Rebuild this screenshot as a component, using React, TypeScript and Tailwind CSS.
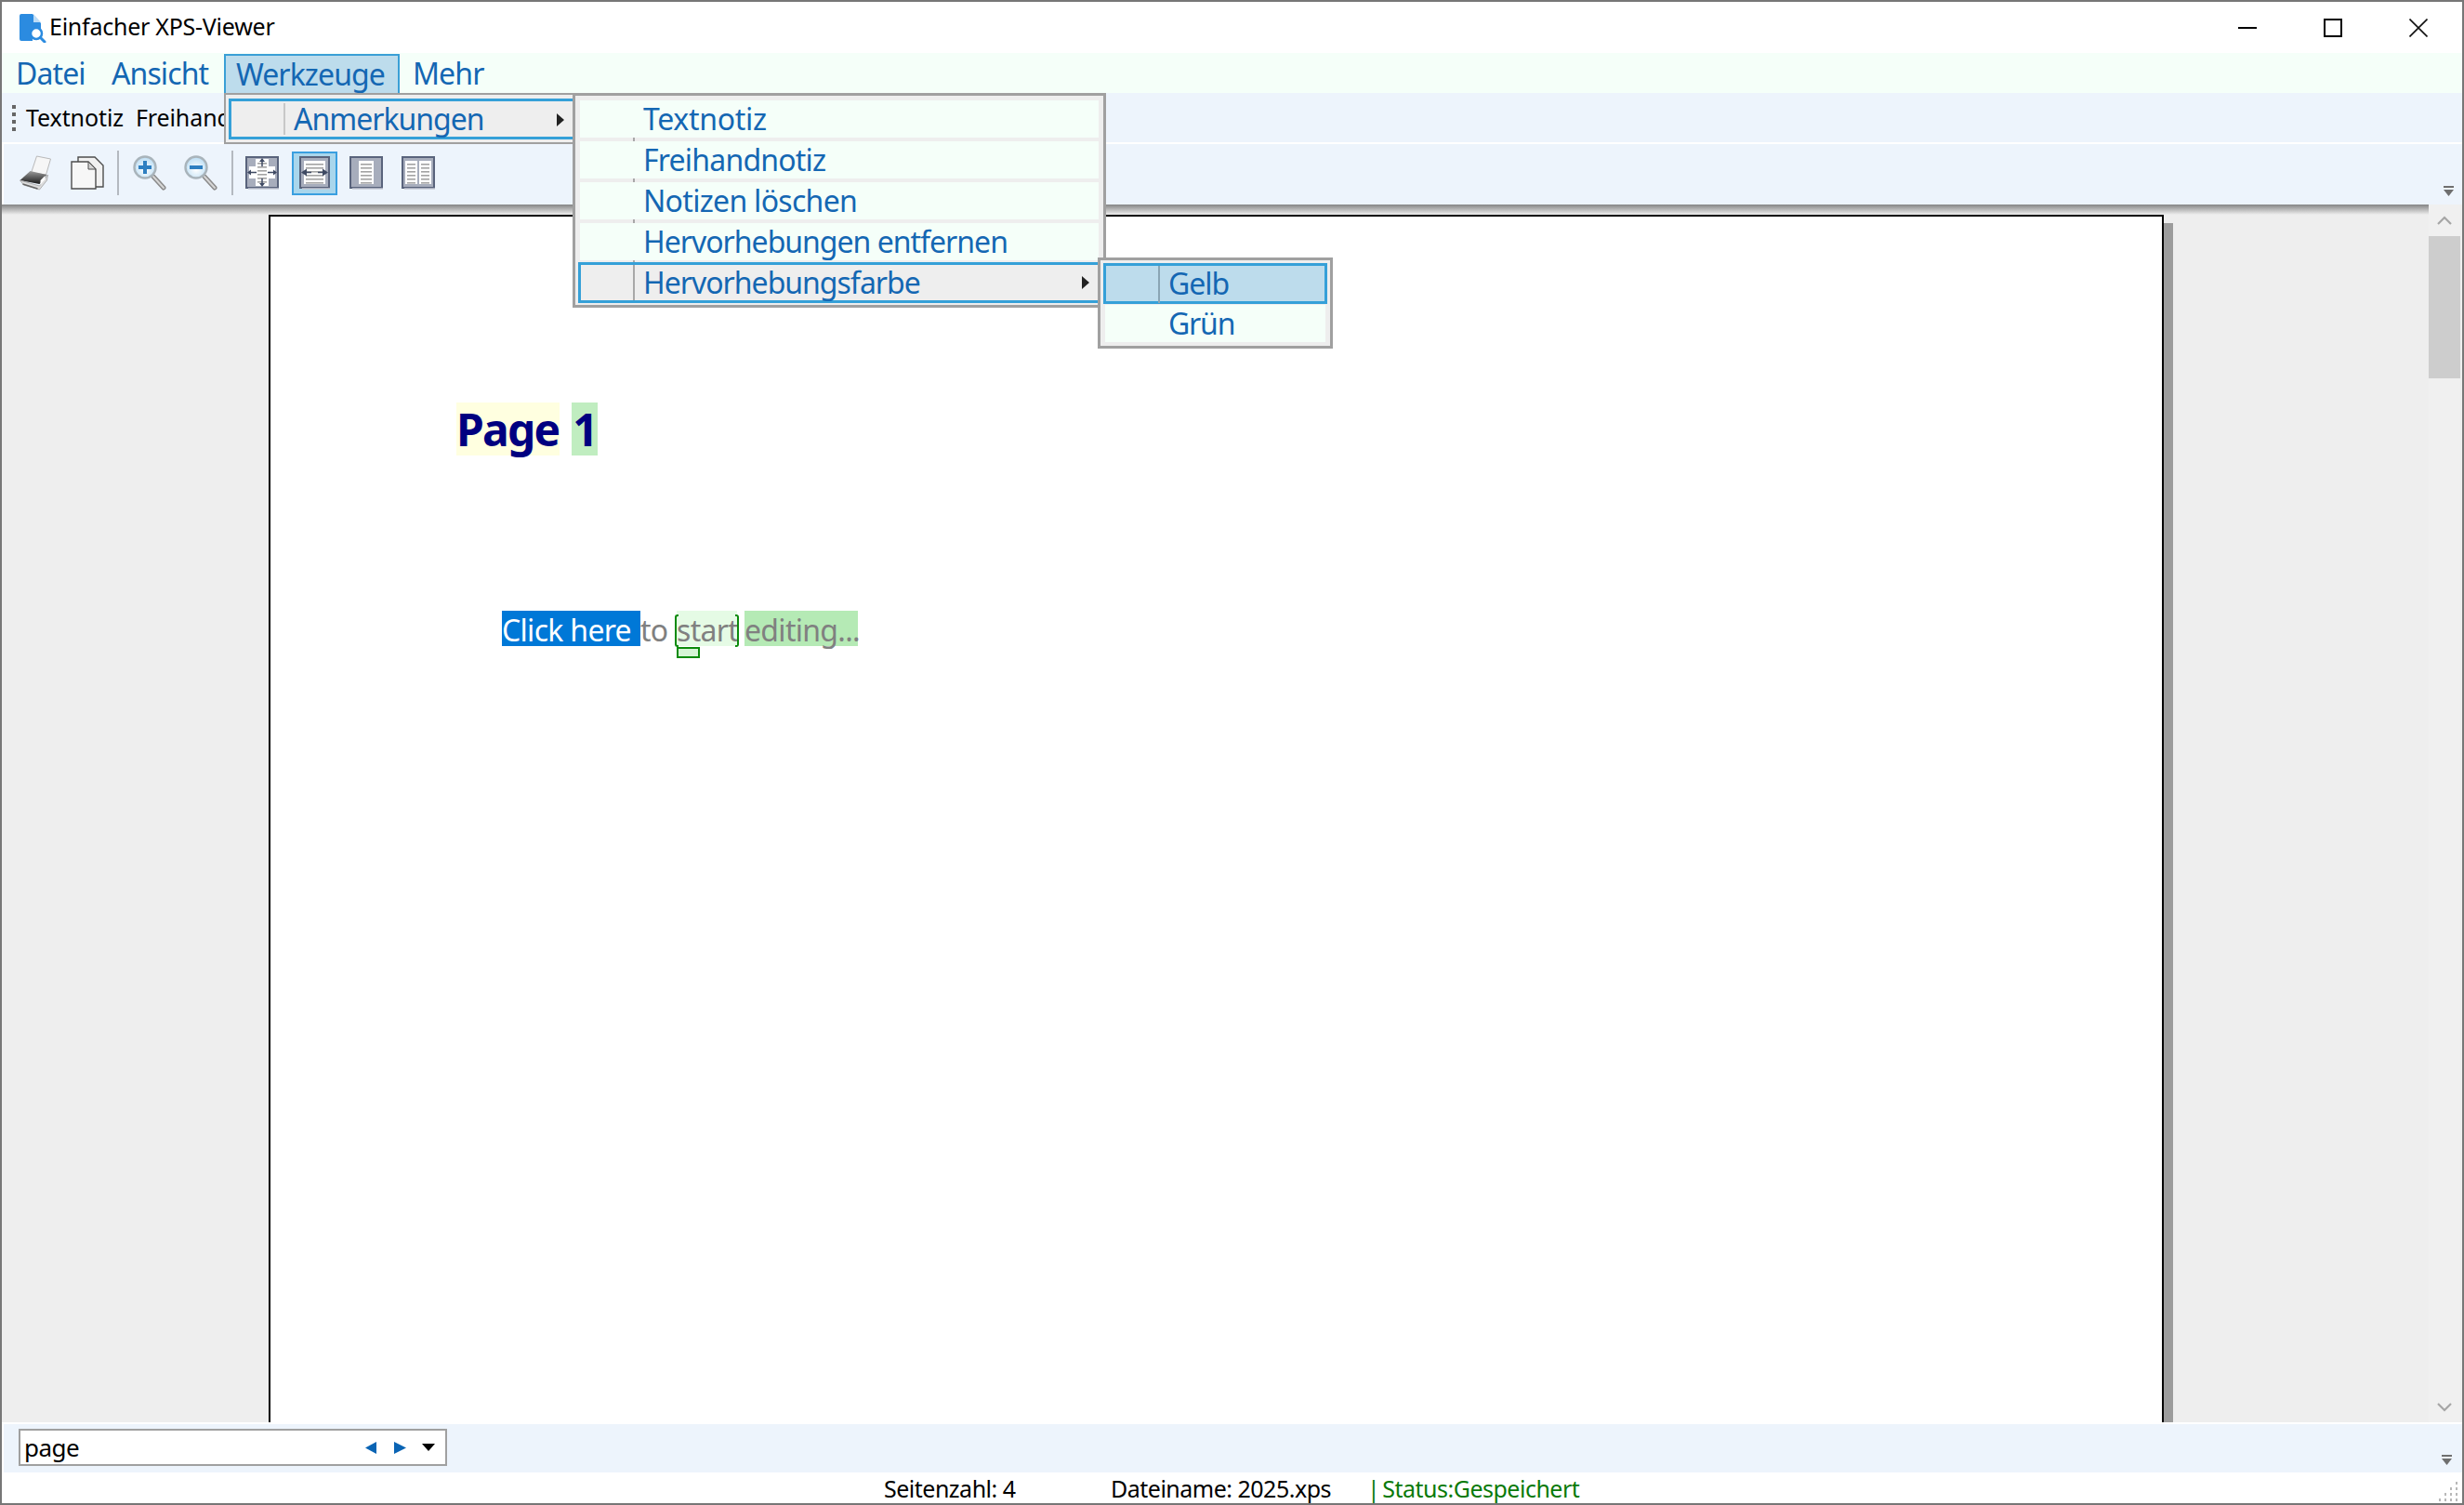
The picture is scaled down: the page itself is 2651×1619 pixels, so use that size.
const menuBlue = "text-[#1467b3]";

function AppIcon() {
  return (
    <svg width="30" height="32" viewBox="0 0 30 32">
      <path d="M1 3a2 2 0 0 1 2-2h12l9 10v7a9 9 0 0 0-9 11v1H3a2 2 0 0 1-2-2z" fill="#2b8be0" />
      <path d="M16 1l8 9h-8z" fill="#bcdcf6" />
      <circle cx="19" cy="22" r="6" fill="#fff" stroke="#2b8be0" strokeWidth="2.5" />
      <path d="M23.500 26.500l4.500 4.500" stroke="#2b8be0" strokeWidth="3" strokeLinecap="round" />
    </svg>
  );
}

function PrintIcon() {
  return (
    <svg width="36" height="38" viewBox="2 0 35 38">
      <defs>
        <linearGradient id="pr" x1="0" y1="0" x2="0" y2="1">
          <stop offset="0" stopColor="#9a9a9a" />
          <stop offset="1" stopColor="#1a1a1a" />
        </linearGradient>
      </defs>
      <path d="M15 19L21 1l15 3-5 17z" fill="#f6f6f6" stroke="#b9b9b9" />
      <path d="M3 27l11-10 18 4-8 10z" fill="url(#pr)" />
      <path d="M3 27l21 6 9-12-1 6-8 10-17-5z" fill="#dcdcdc" stroke="#9a9a9a" strokeWidth="0.7" />
      <path d="M6 31l16 5" stroke="#666" strokeWidth="1.4" />
      <path d="M25 27l5-5v4l-5 6z" fill="#fff" />
    </svg>
  );
}

function CopyIcon() {
  return (
    <svg width="36" height="36" viewBox="0 0 36 36">
      <path d="M8 1h18l9 9v23H8z" fill="#f1f1f1" stroke="#4d4d4d" strokeWidth="1.4" />
      <path d="M1 6h18l8 8v21H1z" fill="#f7f7f7" stroke="#4d4d4d" strokeWidth="1.4" />
      <path d="M19 6v8h8z" fill="#d5d5d5" stroke="#4d4d4d" strokeWidth="1" />
    </svg>
  );
}

function ZoomIcon({ id, plus }: { id: string; plus: boolean }) {
  return (
    <svg width="36" height="38" viewBox="0 0 36 38">
      <defs>
        <radialGradient id={id} cx="0.5" cy="0.6" r="0.6">
          <stop offset="0" stopColor="#ffffff" />
          <stop offset="1" stopColor="#b9dcf3" />
        </radialGradient>
      </defs>
      <path d="M22 23l11 12" stroke="#8b8b8b" strokeWidth="5" strokeLinecap="round" />
      <path d="M22 23l11 12" stroke="#d6d6d6" strokeWidth="2" strokeLinecap="round" />
      <circle cx="13" cy="13" r="11.500" fill={`url(#${id})`} stroke="#a9b4bb" strokeWidth="2.4" />
      <path d="M6 13h14" stroke="#2e7fc1" strokeWidth="4" />
      {plus && <path d="M13 6v14" stroke="#2e7fc1" strokeWidth="4" />}
    </svg>
  );
}

function PageFrame({ children, w = 36 }: { children: React.ReactNode; w?: number }) {
  return (
    <svg width={w} height="36" viewBox={`0 0 ${w} 36`}>
      <rect x="1" y="1" width={w - 2} height="33" fill="#a7adbc" stroke="#59637c" strokeWidth="2" />
      <path d={`M3 35h${w - 2}V4`} fill="none" stroke="#c3c8d2" strokeWidth="1.5" />
      {children}
    </svg>
  );
}

function Lines({ x, w, y, n, gap }: { x: number; w: number; y: number; n: number; gap: number }) {
  const rows = [];
  for (let i = 0; i < n; i++) rows.push(<rect key={i} x={x} y={y + i * gap} width={w} height="1.6" fill="#a3a3a3" />);
  return <>{rows}</>;
}

function ToolSep() {
  return <div className="w-[2px] h-[48px] bg-[#b4b9c0]" />;
}

function ChevronOverflow() {
  return (
    <svg width="12" height="12" viewBox="0 0 12 12">
      <rect x="0" y="0" width="11" height="2" fill="#6f6f6f" />
      <path d="M0 4h11l-5.500 7z" fill="#6f6f6f" />
    </svg>
  );
}

function Arrow() {
  return (
    <svg width="9" height="14" viewBox="0 0 9 14">
      <path d="M0 0l8 7-8 7z" fill="#222" />
    </svg>
  );
}

function MenuRow({ label, height, text, width }: { label: string; height: string; text: string; width?: string }) {
  return (
    <div className={`flex items-center ${height} ${width ?? ""} ${menuBlue} ${text}`}>
      <span>{label}</span>
    </div>
  );
}

function SubItem({ label, tracking }: { label: string; tracking: string }) {
  return (
    <div className="relative h-[40px] w-[558px] bg-[#f5fff9] pl-[68px] flex items-center">
      <span className={`text-[32px] leading-none ${tracking} ${menuBlue}`}>{label}</span>
      <span className="absolute left-[57px] -bottom-[4px] w-[2px] h-[4px] bg-[#a8a8a8]" />
    </div>
  );
}

export default function App() {
  return (
    <div className="relative w-[2651px] h-[1619px] overflow-hidden bg-white font-['Noto_Sans','Open_Sans',sans-serif]">
      <div className="w-full h-full box-border border-2 border-[#777777] flex flex-col">
        {/* title bar */}
        <div className="h-[55px] shrink-0 flex items-center pl-[18px] pr-[37px]">
          <AppIcon />
          <span className="ml-[3px] -mt-[2px] text-[25px] tracking-[-0.25px] text-black">Einfacher XPS-Viewer</span>
          <div className="ml-auto flex items-center gap-[72px]">
            <div className="w-[20px] h-[2px] bg-black" />
            <div className="w-[20px] h-[20px] border-2 border-black" />
            <svg width="20" height="20" viewBox="0 0 20 20">
              <path d="M0.500 0.500l19 19M19.500 0.500l-19 19" stroke="#111" strokeWidth="1.6" />
            </svg>
          </div>
        </div>

        {/* menu bar */}
        <div className="h-[43px] shrink-0 bg-[#f5fff9] flex items-center pl-[15px] text-[32px] tracking-[-0.9px]">
          <MenuRow label="Datei" height="h-[43px]" text="" width="w-[103px]" />
          <MenuRow label="Ansicht" height="h-[43px]" text="" width="w-[121px]" />
          <div className={`h-[42px] mt-[1px] w-[189px] box-border border-2 border-b-0 border-[#3a9fd6] bg-[#bddcec] pl-[11px] flex items-center ${menuBlue}`}>
            Werkzeuge
          </div>
          <MenuRow label="Mehr" height="h-[43px]" text="ml-[14px]" />
        </div>

        {/* annotation toolbar */}
        <div className="h-[53px] shrink-0 bg-[#edf4fc] flex items-center pl-[11px] text-[25px] tracking-[-0.1px] text-black">
          <div className="w-[4px] h-[28px] mr-[11px] bg-[repeating-linear-gradient(to_bottom,#666_0,#666_4px,transparent_4px,transparent_8px)]" />
          <span>Textnotiz</span>
          <span className="ml-[13px]">Freihandnotiz</span>
        </div>
        <div className="h-[2px] shrink-0 bg-white" />

        {/* main toolbar */}
        <div className="relative ml-[2px] h-[65px] shrink-0 bg-[#edf4fc] flex items-center pl-[16px] pb-[3px]">
          <PrintIcon />
          <div className="ml-[20px]"><CopyIcon /></div>
          <div className="ml-[14px]"><ToolSep /></div>
          <div className="ml-[15px]"><ZoomIcon id="zi" plus /></div>
          <div className="ml-[19px]"><ZoomIcon id="zo" plus={false} /></div>
          <div className="ml-[15px]"><ToolSep /></div>
          <div className="ml-[13px]">
            <PageFrame>
              <rect x="11" y="3" width="14" height="29" fill="#fff" />
              <rect x="4" y="11" width="28" height="13" fill="#fff" />
              <Lines x={13} w={10} y={7} n={6} gap={4} />
              <path d="M18 4v7M18 24v7M4 17.500h8M24 17.500h8" stroke="#3f4a63" strokeWidth="1.5" />
              <path d="M18 2l-3 4h6zM18 33l-3-4h6zM2 17.500l4-3v6zM34 17.500l-4-3v6z" fill="#3f4a63" />
            </PageFrame>
          </div>
          <div className="ml-[14px] w-[49px] h-[47px] box-border border-2 border-[#3a9fe0] bg-[#a9d6ec] flex items-center justify-center">
            <PageFrame w={33}>
              <rect x="5" y="5" width="23" height="25" fill="#fff" />
              <Lines x={7} w={19} y={8} n={6} gap={4} />
              <path d="M4 17.500h9M20 17.500h9" stroke="#3f4a63" strokeWidth="1.6" />
              <path d="M2 17.500l6-4v8zM31 17.500l-6-4v8z" fill="#3f4a63" />
            </PageFrame>
          </div>
          <div className="ml-[13px]">
            <PageFrame>
              <rect x="10" y="5" width="16" height="25" fill="#fff" />
              <Lines x={12} w={12} y={8} n={6} gap={4} />
            </PageFrame>
          </div>
          <div className="ml-[20px]">
            <PageFrame>
              <rect x="4" y="5" width="13" height="25" fill="#fff" />
              <rect x="19" y="5" width="13" height="25" fill="#fff" />
              <Lines x={6} w={9} y={8} n={6} gap={4} />
              <Lines x={21} w={9} y={8} n={6} gap={4} />
            </PageFrame>
          </div>
          <div className="absolute right-[8px] bottom-[8px]"><ChevronOverflow /></div>
        </div>

        {/* document area */}
        <div className="flex-1 min-h-0 flex bg-[#eeeeee]">
          <div className="relative flex-1 min-w-0 overflow-hidden pl-[287px] pt-[11px]">
            <div className="w-[2039px] h-[1400px] box-border border-2 border-black bg-white shadow-[10px_9px_0_#9c9c9c] pl-[200px] pt-[200px]">
              <div className="flex items-start h-[57px] text-[48px] leading-[57px] font-bold text-[#000080] tracking-[-1.8px]">
                <span className="w-[111px] h-[57px] bg-[#ffffe0]">Page</span>
                <span className="ml-[13px] w-[28px] h-[57px] text-center bg-[#c0edc0]">1</span>
              </div>
              <div className="relative mt-[167px] ml-[49px] flex h-[38px] text-[32px] leading-[42px] tracking-[-0.7px] text-[#808080] whitespace-nowrap">
                <span className="w-[149px] bg-[#0078d7] text-white">Click here</span>
                <span className="w-[39px]">to</span>
                <span className="relative w-[65px] bg-[#e5fbe5]">
                  start
                  <span className="absolute -left-[2px] top-[4px] -bottom-[1px] w-[4px] border-2 border-r-0 rounded-l-[3px] border-[#0a8a0a]" />
                  <span className="absolute -right-[2px] top-[4px] -bottom-[1px] w-[4px] border-2 border-l-0 rounded-r-[3px] border-[#0a8a0a]" />
                  <span className="absolute left-0 top-[39px] w-[25px] h-[12px] border-2 border-[#0a8a0a] bg-[#d5f5d5]" />
                </span>
                <span className="ml-[8px] w-[122px] bg-[#b5eab5]">editing...</span>
              </div>
            </div>
            <div className="absolute left-0 right-0 top-0 h-[11px] bg-gradient-to-b from-[#858585] to-[#eeeeee00]" />
          </div>
          <div className="w-[34px] mr-[2px] shrink-0 flex flex-col bg-[#f0f0f0]">
            <div className="h-[34px] flex items-center justify-center">
              <svg width="16" height="10" viewBox="0 0 16 10"><path d="M1 9l7-7 7 7" fill="none" stroke="#a6a6a6" strokeWidth="2.2" /></svg>
            </div>
            <div className="h-[153px] bg-[#cdcdcd]" />
            <div className="flex-1" />
            <div className="h-[32px] flex items-center justify-center">
              <svg width="16" height="10" viewBox="0 0 16 10"><path d="M1 1l7 7 7-7" fill="none" stroke="#a6a6a6" strokeWidth="2.2" /></svg>
            </div>
          </div>
        </div>

        {/* find toolbar */}
        <div className="relative mt-[2px] ml-[2px] h-[52px] shrink-0 bg-[#edf4fc] pl-[16px] pt-[5px]">
          <div className="w-[461px] h-[40px] box-border border-2 border-[#a0a0a0] bg-white flex items-center pl-[4px]">
            <span className="text-[26px] tracking-[-0.5px] text-black">page</span>
            <div className="ml-auto mr-[11px] flex items-center gap-[19px]">
              <svg width="12" height="13" viewBox="0 0 12 13"><path d="M12 0v13L0 6.500z" fill="#0a64b4" /></svg>
              <svg width="13" height="13" viewBox="0 0 13 13"><path d="M0 0v13l13-6.500z" fill="#0a64b4" /></svg>
              <svg className="-ml-[2px]" width="14" height="8" viewBox="0 0 14 8"><path d="M0 0h14L7 8z" fill="#000" /></svg>
            </div>
          </div>
          <div className="absolute right-[10px] bottom-[7px]"><ChevronOverflow /></div>
        </div>

        {/* status bar */}
        <div className="relative h-[33px] shrink-0 flex items-end pl-[949px] text-[25px] leading-[32px] tracking-[-0.5px] text-black whitespace-nowrap">
          <span className="w-[244px]">Seitenzahl: 4</span>
          <span className="w-[276px]">Dateiname: 2025.xps</span>
          <span className="text-[#0a7a0a]">|</span>
          <span className="ml-[3px] text-[#0a7a0a]">Status:Gespeichert</span>
          <svg className="absolute right-[4px] bottom-[2px]" width="21" height="21" viewBox="0 0 21 21" fill="#b8b8b8">
            <rect x="18" y="0" width="2" height="3" /><rect x="18" y="6" width="2" height="3" /><rect x="12" y="6" width="2" height="3" />
            <rect x="18" y="12" width="2" height="3" /><rect x="12" y="12" width="2" height="3" /><rect x="6" y="12" width="2" height="3" />
            <rect x="18" y="18" width="2" height="3" /><rect x="12" y="18" width="2" height="3" /><rect x="6" y="18" width="2" height="3" /><rect x="0" y="18" width="2" height="3" />
          </svg>
        </div>
      </div>

      {/* Werkzeuge dropdown */}
      <div className="absolute left-[241px] top-[100px] w-[377px] h-[55px] box-border border-2 border-[#a0a0a0] bg-[#eeeeee] pt-[4px] pl-[3px]">
        <div className="relative h-[44px] w-[372px] box-border border-[3px] border-r-0 border-[#35a0d8] flex items-center pl-[67px]">
          <span className={`text-[32px] leading-none tracking-[-1px] ${menuBlue}`}>Anmerkungen</span>
          <span className="absolute left-[56px] top-[2px] bottom-[2px] w-[2px] bg-[#c8c8c8]" />
          <div className="absolute right-[10px] top-[13px]"><Arrow /></div>
        </div>
      </div>

      {/* Anmerkungen submenu */}
      <div className="absolute left-[616px] top-[100px] w-[574px] h-[231px] box-border border-[3px] border-[#a0a0a0] bg-[#eeeeee] pl-[5px] pt-[5px] flex flex-col gap-[4px]">
        <SubItem label="Textnotiz" tracking="tracking-[-0.3px]" />
        <SubItem label="Freihandnotiz" tracking="tracking-[-0.8px]" />
        <SubItem label="Notizen löschen" tracking="tracking-[-0.7px]" />
        <SubItem label="Hervorhebungen entfernen" tracking="tracking-[-1px]" />
        <div className="relative -mt-[2px] -ml-[2px] h-[44px] w-[560px] box-border border-[3px] border-r-0 border-[#35a0d8] flex items-center pl-[67px]">
          <span className={`text-[32px] leading-none tracking-[-1px] ${menuBlue}`}>Hervorhebungsfarbe</span>
          <span className="absolute left-[56px] top-0 bottom-0 w-[2px] bg-[#a8a8a8]" />
          <div className="absolute right-[9px] top-[12px]"><Arrow /></div>
        </div>
      </div>

      {/* Hervorhebungsfarbe submenu */}
      <div className="absolute left-[1181px] top-[277px] w-[253px] h-[98px] box-border border-[3px] border-[#a0a0a0] bg-[#eeeeee] pl-[3px] pt-[3px]">
        <div className="relative h-[44px] w-[241px] box-border border-[3px] border-[#35a0d8] bg-[#bddcec] flex items-center pl-[67px]">
          <span className={`text-[32px] leading-none tracking-[-1px] ${menuBlue}`}>Gelb</span>
          <span className="absolute left-[56px] top-0 -bottom-[2px] w-[2px] bg-[#8aa6b5]" />
        </div>
        <div className="mt-[1px] ml-[2px] h-[40px] w-[237px] bg-[#f5fff9] pl-[68px] flex items-center">
          <span className={`text-[32px] leading-none tracking-[-1.2px] ${menuBlue}`}>Grün</span>
        </div>
      </div>
    </div>
  );
}
